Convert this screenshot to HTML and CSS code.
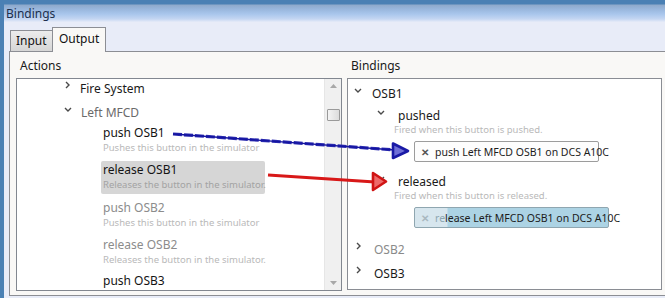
FILE: index.html
```html
<!DOCTYPE html>
<html>
<head>
<meta charset="utf-8">
<link rel="stylesheet" href="styles.css">
</head>
<body>
<div class="window">
  <div class="titlebar">Bindings</div>
  <div class="tabs">
    <div class="tab">Input</div>
    <div class="tab active">Output</div>
  </div>
  <div class="panel">
    <div class="col col-left">
      <div class="col-label">Actions</div>
      <div class="box">
        <div class="list">
          <div class="group">
            <svg class="chev-r" viewBox="0 0 5 8"><path d="M1 1 L4 4 L1 7"/></svg>
            <span>Fire System</span>
          </div>
          <div class="group group-open">
            <svg class="chev-d" viewBox="0 0 8 5"><path d="M1 1 L4 4 L7 1"/></svg>
            <span class="muted">Left MFCD</span>
          </div>
          <div class="item">
            <div class="item-title">push OSB1</div>
            <div class="item-desc">Pushes this button in the simulator</div>
          </div>
          <div class="item selected">
            <div class="item-title">release OSB1</div>
            <div class="item-desc">Releases the button in the simulator.</div>
          </div>
          <div class="item faded">
            <div class="item-title">push OSB2</div>
            <div class="item-desc">Pushes this button in the simulator</div>
          </div>
          <div class="item faded">
            <div class="item-title">release OSB2</div>
            <div class="item-desc">Releases the button in the simulator.</div>
          </div>
          <div class="item item-last">
            <div class="item-title">push OSB3</div>
          </div>
        </div>
        <div class="scrollbar">
          <svg class="sb-arrow" viewBox="0 0 7 4"><path d="M0 4 L3.5 0 L7 4 Z"/></svg>
          <div class="sb-thumb"></div>
          <div class="sb-track"></div>
          <svg class="sb-arrow" viewBox="0 0 7 4"><path d="M0 0 L3.5 4 L7 0 Z"/></svg>
        </div>
      </div>
    </div>
    <div class="col col-right">
      <div class="col-label">Bindings</div>
      <div class="box box-right">
        <div class="btree">
          <div class="brow">
            <svg class="chev-d" viewBox="0 0 8 5"><path d="M1 1 L4 4 L7 1"/></svg>
            <span>OSB1</span>
          </div>
          <div class="event event-first">
            <svg class="chev-d" viewBox="0 0 8 5"><path d="M1 1 L4 4 L7 1"/></svg>
            <span>pushed</span>
          </div>
          <div class="event-desc">Fired when this button is pushed.</div>
          <div class="binding">
            <span class="x">✕</span>
            <span>push Left MFCD OSB1 on DCS A10C</span>
          </div>
          <div class="event">
            <svg class="chev-d" viewBox="0 0 8 5"><path d="M1 1 L4 4 L7 1"/></svg>
            <span>released</span>
          </div>
          <div class="event-desc">Fired when this button is released.</div>
          <div class="binding binding-drag">
            <span class="x">✕</span>
            <span><span class="ghost">re</span>lease Left MFCD OSB1 on DCS A10C</span>
          </div>
          <div class="brow brow-gap">
            <svg class="chev-r" viewBox="0 0 5 8"><path d="M1 1 L4 4 L1 7"/></svg>
            <span class="muted2">OSB2</span>
          </div>
          <div class="brow">
            <svg class="chev-r" viewBox="0 0 5 8"><path d="M1 1 L4 4 L1 7"/></svg>
            <span>OSB3</span>
          </div>
          <div class="brow">
            <svg class="chev-r" viewBox="0 0 5 8"><path d="M1 1 L4 4 L1 7"/></svg>
          </div>
        </div>
      </div>
    </div>
  </div>
  <svg class="arrows" width="665" height="298" viewBox="0 0 665 298">
    <line x1="173" y1="134" x2="395" y2="150" stroke="#2b2bb0" stroke-width="3.2" stroke-dasharray="9 2"/>
    <line x1="173" y1="134" x2="395" y2="150" stroke="#1414a0" stroke-width="1.4"/>
    <path d="M393 143.5 L408 151 L393 158 Z" fill="#7070d8" stroke="#1a1aa6" stroke-width="2.6" stroke-linejoin="round"/>
    <line x1="268" y1="175" x2="375" y2="182" stroke="#d81818" stroke-width="3"/>
    <path d="M373 173 L386 181.5 L373 190 Z" fill="#ee6a6a" stroke="#d01414" stroke-width="2.6" stroke-linejoin="round"/>
  </svg>
</div>
</body>
</html>
```

FILE: styles.css
```css
* { box-sizing: border-box; }
html, body { margin: 0; padding: 0; }
body {
  width: 665px;
  height: 298px;
  overflow: hidden;
  font-family: "Noto Sans", "Open Sans", sans-serif;
  background: #e8ecf8;
}
.window {
  position: relative;
  width: 665px;
  height: 298px;
  overflow: hidden;
  border-left: 4px solid #4a80b4;
  background: #e8ecf8;
}
.titlebar {
  height: 22px;
  padding: 6px 0 0 2px;
  font-size: 12px;
  line-height: 16px;
  color: #1c2f4c;
  background: linear-gradient(to bottom, #4a80b4 0px, #4a80b4 4px, #8ea9cb 5px, #98b6dc 9px, #a9c6ec 14px, #c4d6f2 19px, #e6ebf8 22px);
}
.tabs {
  display: flex;
  align-items: flex-end;
  height: 29px;
  padding-left: 6px;
  position: relative;
  z-index: 2;
}
.tab {
  height: 21px;
  width: 42px;
  border: 1px solid #8c8e94;
  border-bottom: none;
  border-right: none;
  background: linear-gradient(to bottom, #ececec, #d6d6d6);
  font-size: 12px;
  line-height: 19px;
  padding-left: 5px;
  color: #111;
}
.tab.active {
  height: 25px;
  width: 54px;
  margin-bottom: -1px;
  border-right: 1px solid #8c8e94;
  background: #f9f8f6;
  line-height: 21px;
  padding-left: 6px;
}
.panel {
  margin-left: 5px;
  width: 700px;
  height: 245px;
  border: 1px solid #8c8e94;
  background: #f9f8f6;
  display: flex;
  padding-left: 6px;
  gap: 5px;
}
.col { display: flex; flex-direction: column; }
.col-left { width: 326px; }
.col-right { width: 315px; }
.col-label {
  height: 26px;
  padding: 6px 0 0 4px;
  font-size: 12px;
  line-height: 16px;
  color: #1a1a1a;
}
.box {
  height: 213px;
  border: 1px solid #828790;
  background: #fff;
  display: flex;
  overflow: hidden;
}
.box-right { height: 212px; border-color: #8a8d94; }
.list { flex: 1; overflow: hidden; padding-top: 0; }
.group {
  display: flex;
  align-items: center;
  height: 18px;
  font-size: 12px;
  color: #1a1a1a;
  padding-left: 48px;
  gap: 10px;
}
.group-open { margin-top: 6px; padding-left: 47px; gap: 9px; }
.chev-r, .chev-d { fill: none; stroke: #4a4a4a; stroke-width: 1.4; margin-bottom: 6px; flex: none; }
.chev-r { width: 5px; height: 8px; }
.chev-d { width: 8px; height: 5px; }
.muted { color: #6a6a6a; }
.muted2 { color: #8a8a8a; }
.item {
  width: 164px;
  height: 33px;
  margin: 4px 0 0 84px;
  padding: 1px 0 0 2px;
  border-radius: 2px;
}
.group-open + .item { margin-top: 3px; }
.selected + .item { margin-top: 5px; }
.item-last { height: 16px; padding-top: 0; }
.item-title { font-size: 12px; line-height: 16px; color: #141414; }
.item-desc { font-size: 9.5px; line-height: 14px; color: #b9b9b9; white-space: nowrap; }
.item.selected { background: #d6d6d6; }
.item.selected .item-desc { color: #a3a3a3; }
.item.faded .item-title { color: #8c8c8c; }
.scrollbar {
  width: 17px;
  flex: none;
  background: #f0f0f0;
  border-left: 1px solid #e6e6e6;
  display: flex;
  flex-direction: column;
  align-items: center;
  padding: 5px 0 5px 0;
}
.sb-arrow { width: 7px; height: 4px; fill: #a8a8a8; flex: none; }
.sb-thumb {
  margin-top: 21px;
  width: 13px;
  height: 12px;
  border: 1px solid #9a9a9a;
  border-radius: 1px;
  background: linear-gradient(to right, #f4f4f4, #dcdcdc);
  flex: none;
}
.sb-track { flex: 1; }
.btree { flex: 1; padding-top: 5px; font-size: 12px; color: #1a1a1a; }
.brow {
  display: flex;
  align-items: center;
  height: 18px;
  padding-left: 6px;
  gap: 10px;
  margin-top: 6px;
}
.brow:first-child { margin-top: 0; padding-left: 6px; gap: 10px; }
.brow .chev-r { margin-left: 2px; margin-right: 3px; }
.brow-gap { margin-top: 12px; }
.event {
  display: flex;
  align-items: center;
  height: 16px;
  padding-left: 29px;
  gap: 13px;
  margin-top: 11px;
}
.event-first { margin-top: 5px; }
.event-desc {
  padding-left: 46px;
  font-size: 9.5px;
  line-height: 13px;
  color: #b9b9b9;
}
.binding {
  margin: 5px 0 0 66px;
  width: 185px;
  height: 21px;
  border: 1px solid #9c9c9c;
  border-radius: 2px;
  background: #fdfdfd;
  display: flex;
  align-items: center;
  padding-left: 6px;
  gap: 6px;
  font-size: 10.5px;
  color: #1c1c1c;
  white-space: nowrap;
}
.binding .x { font-size: 10px; color: #555; font-weight: bold; width: 8px; }
.binding-drag {
  width: 195px;
  border-color: #8fa6b0;
  background: linear-gradient(to right, #d7e6ee 0px, #d7e6ee 32px, #acd3e4 33px, #acd3e4 100%);
}
.binding-drag .x { color: #a9b8c0; }
.ghost { color: #8ea7b2; }
.arrows { position: absolute; left: -4px; top: 0; pointer-events: none; }
```
